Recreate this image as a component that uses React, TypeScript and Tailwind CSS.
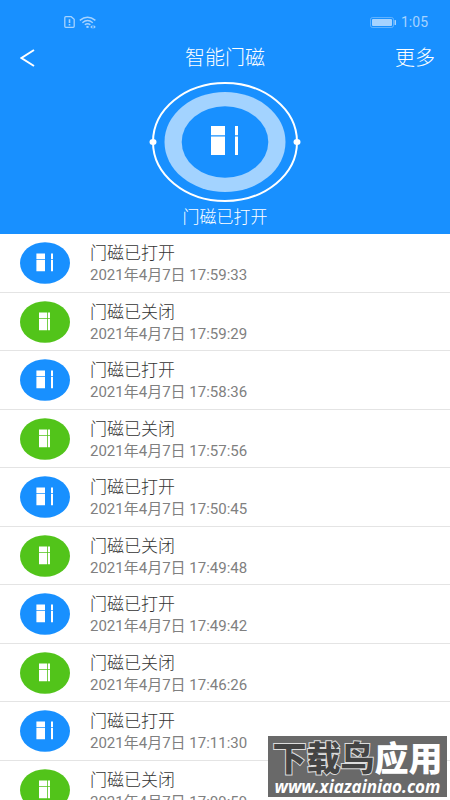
import { useState } from 'react';

type DoorRecord = {
  open: boolean;
  time: string;
};

const records: DoorRecord[] = [
  { open: true, time: '2021年4月7日 17:59:33' },
  { open: false, time: '2021年4月7日 17:59:29' },
  { open: true, time: '2021年4月7日 17:58:36' },
  { open: false, time: '2021年4月7日 17:57:56' },
  { open: true, time: '2021年4月7日 17:50:45' },
  { open: false, time: '2021年4月7日 17:49:48' },
  { open: true, time: '2021年4月7日 17:49:42' },
  { open: false, time: '2021年4月7日 17:46:26' },
  { open: true, time: '2021年4月7日 17:11:30' },
  { open: false, time: '2021年4月7日 17:09:59' },
];

// 状态栏
function StatusBar() {
  return (
    <div className="flex h-10 items-center justify-between pt-1 pl-16 pr-[22px] text-[#a6d3ff]">
      <div className="flex items-center gap-1">
        <svg width="11" height="12" viewBox="0 0 11 12" fill="none" stroke="currentColor" strokeWidth="1.3">
          <path d="M1.8 .7H7.2L10.2 3.2V10.3Q10.2 11.3 9.2 11.3H1.8Q.8 11.3 .8 10.3V1.7Q.8 .7 1.8 .7Z" />
          <path d="M5.5 3.2V7M5.5 8V9.4" strokeWidth="1.6" />
        </svg>
        <svg width="18" height="13" viewBox="0 0 18 13" fill="none" stroke="currentColor" strokeWidth="1.4">
          <path d="M.8 4.4Q8.5 -2 16.4 4.4M3.4 6.8Q8.5 2.4 13.8 6.8M5.8 8.8Q8.5 6.8 11.4 8.8" />
          <path d="M7.4 10.9H9.6" strokeWidth="2" />
          <path d="M11.2 10.9L13.4 9V12.8ZM16.8 10.9L14.6 9V12.8Z" fill="currentColor" stroke="none" />
        </svg>
      </div>
      <div className="flex items-center gap-1">
        <svg width="27" height="11" viewBox="0 0 27 11">
          <rect x=".5" y=".5" width="23" height="10" rx="2" fill="none" stroke="currentColor" strokeOpacity=".5" />
          <rect x="2" y="2" width="20" height="7" rx="1" fill="currentColor" />
          <rect x="24.5" y="3" width="1.5" height="5" rx=".5" fill="currentColor" />
        </svg>
        <span className="text-sm">1:05</span>
      </div>
    </div>
  );
}

// 列表里的门磁图标,打开和关闭两种
function RecordIcon({ open }: { open: boolean }) {
  return (
    <svg width="50" height="42" viewBox="0 0 50 42" className="shrink-0">
      <ellipse cx="25" cy="21" rx="25" ry="20.8" fill={open ? '#1890ff' : '#52c41a'} />
      {open ? (
        <path d="M16.4 11.5H25V17.3H16.4ZM16.4 18H25V29.2H16.4ZM31 11.5H33V17.3H31ZM31 18H33V29.2H31Z" fill="#fff" />
      ) : (
        <path d="M19 11.5H27V17.3H19ZM19 18H27V29.2H19ZM27.8 11.5H30V17.3H27.8ZM27.8 18H30V29.2H27.8Z" fill="#fff" />
      )}
    </svg>
  );
}

// 顶部的大圆环
function DoorRing() {
  return (
    <svg width="152" height="122" viewBox="0 0 152 122" className="block">
      <ellipse cx="76" cy="61" rx="72" ry="59" fill="none" stroke="#fff" strokeWidth="2" />
      <ellipse cx="76" cy="61" rx="60.5" ry="50" fill="#a3d3ff" />
      <ellipse cx="76" cy="61" rx="43.3" ry="35.7" fill="#1890ff" />
      <ellipse cx="4" cy="61" rx="3.5" ry="3" fill="#fff" />
      <ellipse cx="148" cy="61" rx="3.5" ry="3" fill="#fff" />
      <path d="M62 45H76V54.3H62ZM62 55.5H76V74H62ZM86 45H89V54.3H86ZM86 55.5H89V74H86Z" fill="#fff" />
    </svg>
  );
}

export default function App() {
  const [status] = useState('门磁已打开');

  return (
    <div className="relative flex h-screen flex-col overflow-hidden bg-white font-['Roboto','Noto_Sans_CJK_SC',sans-serif]">
      <header className="shrink-0 bg-[#1890ff] text-white">
        <StatusBar />
        <div className="grid h-9 grid-cols-3 items-center px-[15px] text-xl font-light">
          <button type="button" aria-label="返回" className="pl-[5px]">
            <svg width="15" height="18" viewBox="0 0 15 18" fill="none" stroke="#fff" strokeWidth="2">
              <path d="M14 1L1.5 9L14 17" />
            </svg>
          </button>
          <h1 className="text-center">智能门磁</h1>
          <button type="button" className="text-right">更多</button>
        </div>
        <div className="flex flex-col items-center gap-[2px] py-[5px]">
          <DoorRing />
          <p className="text-[17px] leading-6 font-light">{status}</p>
        </div>
      </header>

      <ul className="min-h-0 flex-1 overflow-y-auto [scrollbar-width:none]">
        {records.map((record) => (
          <li
            key={record.time}
            className="flex h-[59px] items-center gap-5 border-b border-[#e4e4e4] px-5 even:h-[58px]"
          >
            <RecordIcon open={record.open} />
            <div>
              <p className="text-[17px] leading-6 font-light text-[#333]">{record.open ? '门磁已打开' : '门磁已关闭'}</p>
              <p className="text-[15px] leading-5 text-[#808080]">{record.time}</p>
            </div>
          </li>
        ))}
      </ul>

      {/* 右下角水印 */}
      <div className="absolute right-[3px] bottom-[3px] flex h-[61px] w-[179px] flex-col items-center justify-end bg-[#696969] text-white">
        <p className="text-[34px] leading-9 font-black">
          <span className="text-[#444] [-webkit-text-stroke:2px_#ddd] [paint-order:stroke_fill]">下载鸟</span>
          应用
        </p>
        <p className="font-['Open_Sans',sans-serif] text-[17px] leading-5 font-bold italic">www.xiazainiao.com</p>
      </div>
    </div>
  );
}
